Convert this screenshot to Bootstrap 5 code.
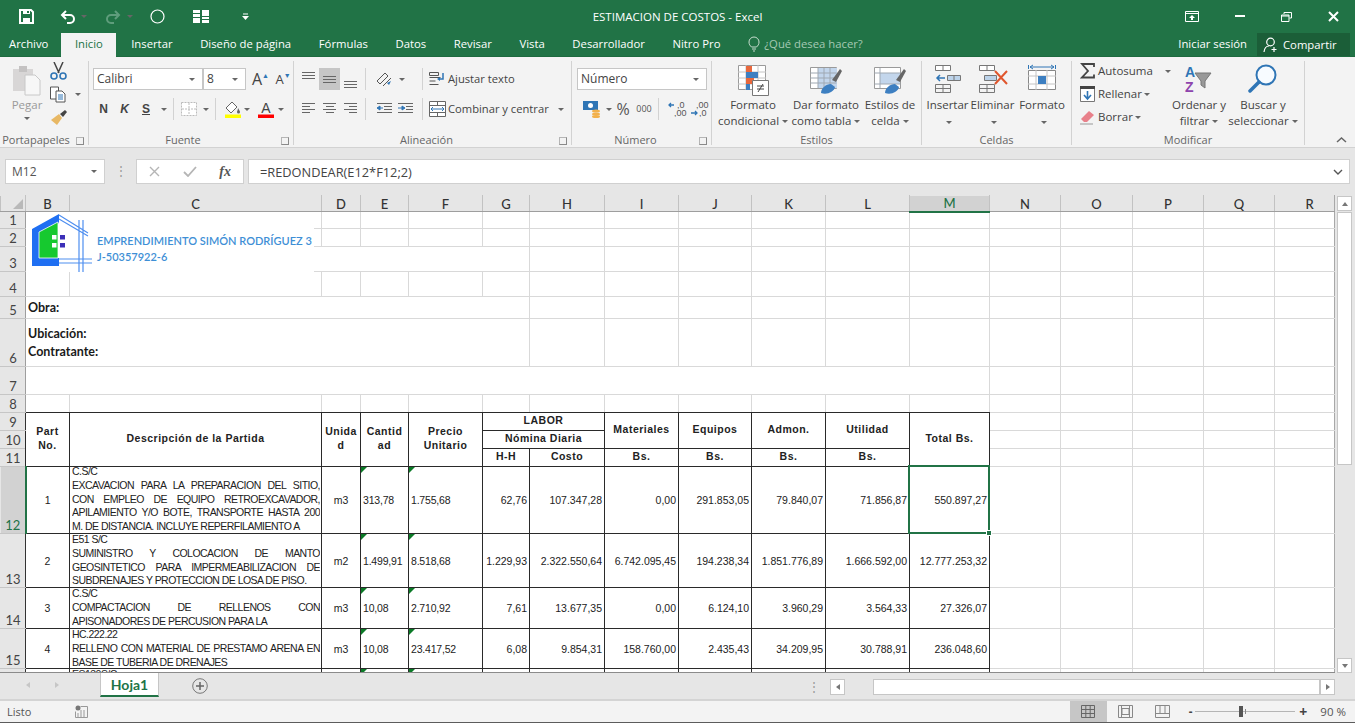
<!DOCTYPE html>
<html lang="es">
<head>
<meta charset="UTF-8">
<title>ESTIMACION DE COSTOS - Excel</title>
<link href="https://cdn.jsdelivr.net/npm/bootstrap@5.3.0/dist/css/bootstrap.min.css" rel="stylesheet">
<style>
html,body{margin:0;height:723px;overflow:hidden;background:#e6e6e6}
.xl-app{width:1355px;height:723px;overflow:hidden;font-family:"Open Sans","Noto Sans",sans-serif;font-size:11.5px;color:#444;line-height:16px}
svg{display:block;flex:none}
.ml1{margin-left:1px}.ml2{margin-left:2px}.ml4{margin-left:4px}.ml6{margin-left:6px}.ml9{margin-left:9px}.mr2{margin-right:2px}.mr5{margin-right:5px}.mr6{margin-right:6px}
/* title + tabs */
.xl-top{background:#217346;color:#fff;height:57px;border-bottom:1px solid #1d6a3f;flex:none}
.xl-title{height:33px}
.xl-qat{flex:1 1 0}
.xl-doc{font-size:11.5px;color:#fff;padding-top:1px}
.xl-win{flex:1 1 0;justify-content:flex-end}
.q1{margin-left:19px}.q2{margin-left:26px}.q3{margin-left:6px}.q4{margin-left:19px}.q5{margin-left:6px}.q6{margin-left:17px}.q7{margin-left:28px}.q8{margin-left:33px}
.car-w{border-top-color:#fff}.car-d{border-top-color:#5f9d7c}
.w1{margin-right:36px}.w2{margin-right:36px}.w3{margin-right:36px}.w4{margin-right:16px}
.xl-tabs{height:24px;font-size:11.3px}
.xl-tab{padding:3px 13.800px 0;white-space:nowrap;color:#fff}
.xl-tab.first{padding:3px 13px 0 9px}
.xl-tab.on{background:#f3f3f3;color:#217346;margin:0 1px 0 0;padding:3px 13.500px 0}
.xl-ask{color:#a5c9b4;padding:3px 0 0 14px}
.xl-share{background:#1b5e38;width:93px;height:23px;margin:0 5px 0 10px;padding-left:6px;gap:4px}
/* ribbon */
.xl-ribbon{height:91px;background:#f3f3f3;border-bottom:1px solid #d2d2d2;padding-top:4px;flex:none}
.xl-grp{height:84px;border-right:1px solid #d2d2d2;position:relative;flex:none}
.xl-body{height:71px}
.xl-lbl{height:13px;line-height:16px;text-align:center;color:#666;font-size:11px;white-space:nowrap}
.xl-launch{position:absolute;right:4px;bottom:0;width:8px;height:8px;border:1px solid #8a8a8a;border-top-color:#b5b5b5;border-left-color:#b5b5b5}
.g1{width:89px}.g2{width:205px}.g3{width:278px}.g4{width:140px}.g5{width:210px}.g6{width:150px}.g7{width:233px}
.pr16{padding-right:16px}.pr12{padding-right:12px}
.xl-row{height:22px}
.xl-rows{padding-top:7px;display:flex;flex-direction:column;gap:8px}
.xl-pl5{padding-left:5px}.xl-pl3{padding-left:3px}
.tb{display:inline-flex;align-items:center;justify-content:center;height:22px;width:21px;flex:none;color:#444}
.tb.on{background:#c6c6c6}
.tb-b{font-family:"Liberation Sans",sans-serif;font-size:12px;font-weight:700}
.tb-up{font-size:16px}.tb-dn{font-size:13px;width:24px}
.tb-up sup,.tb-dn sup{font-size:7px;color:#2f75b5}
.tb-pct{font-size:16px;color:#555;width:22px}
.tb-th{font-size:9px;color:#555;width:20px}
.tb-w22{width:22px}
.xl-vsep{width:1px;height:22px;background:#d2d2d2;flex:none}
.xl-vsep.a{margin:0 6px 0 17px}.xl-vsep.b{margin:0 6px}
.xl-caret{width:0;height:0;border:3px solid transparent;border-top:3.500px solid #666;border-bottom:0;display:inline-block;flex:none}
.xl-field{height:22px;background:#fff;border:1px solid #c6c6c6;padding:0 7px 0 3px;font-size:12px;justify-content:space-between;flex:none}
.fw110{width:110px}.fw43{width:43px}.fw130{width:130px}
.xl-big{display:flex;flex-direction:column;align-items:center;padding-top:3px;flex:none;text-align:center;white-space:nowrap}
.xl-big svg{margin-bottom:1px}
.xl-big svg[height="30"]{margin-bottom:3px}
.xl-big .xl-caret{margin-left:3px;vertical-align:2px}
.bw-paste{width:46px;color:#9a9a9a}
.bw74{width:74px}.bw72{width:72px}.bw56{width:56px}.bw44{width:45px}.bw54{width:54px}.bw48{width:48px}.bw80{width:80px}
.xl-smallcol{display:flex;flex-direction:column;margin-top:-1px;gap:1px}
.xl-smallcol>div{height:22px;display:flex;align-items:center}
.xl-w103{width:103px}
.xl-small-t{font-size:11.200px;white-space:nowrap}
.xl-chev{margin:auto 8px 4px auto}
/* formula bar */
.xl-fbar{height:47px;background:#e6e6e6;padding:11px 5px 0 5px;flex:none}
.xl-box{height:25px;background:#fff;border:1px solid #d0d0d0;align-items:center;flex:none}
.xl-name{width:100px;padding:0 7px 0 6px;font-size:12px;justify-content:space-between;color:#555}
.xl-dots{width:31px;color:#999;justify-content:center;flex:none;line-height:24px}
.xl-fn{width:108px;justify-content:space-between;padding:0 12px}
.xl-fxt{font-family:"Liberation Serif",serif;font-style:italic;font-weight:700;font-size:14px;color:#555}
.xl-input{flex:1 1 0;margin-left:4px;padding:0 6px 0 11px;justify-content:space-between;font-size:12.800px;color:#444}
/* sheet */
.xl-main{height:478px;flex:none}
.xl-wrap{width:1335px;height:478px;overflow:hidden;position:relative;background:#fff;flex:none;border-bottom:1px solid #8b8b8b}
.xl-sheet{border-collapse:collapse;table-layout:fixed;width:1334px;font-family:"Liberation Sans",sans-serif;font-size:10.500px;color:#222;line-height:14px}
.xl-sheet td,.xl-sheet th{border:1px solid #d9d9d9;padding:0 2px;position:relative;overflow:visible;white-space:nowrap;font-weight:400}
.xl-sheet tr>*:last-child{border-right-color:#a8a8a8}
.xl-sheet thead th{background:#e6e6e6;border-color:#e6e6e6 #c2c2c2 #9e9e9e #c2c2c2;text-align:center;font-family:Lato,sans-serif;font-size:13px;font-weight:500;color:#333;padding:0;height:16px}
.xl-sheet thead th.sel{background:#d2d2d2;color:#217346;border-bottom:2px solid #217346}
.xl-sheet thead th.last{padding-left:10px}
.c0{width:25px}.c1{width:44px}.c2{width:252px}.c3{width:39px}.c4{width:48px}.c5{width:74px}.c6{width:47px}.c7{width:75px}.c8{width:74px}.c9{width:73px}.c10{width:74px}.c11{width:84px}.c12{width:80px}.c13{width:71px}.c14{width:72px}.c15{width:71px}.c16{width:71px}.c17{width:60px}
.rh{background:#e6e6e6!important;border-color:#c6c6c6 #9e9e9e #c6c6c6 #e6e6e6!important;text-align:center;font-family:Lato,sans-serif;font-size:13px;color:#444;vertical-align:bottom;padding:0!important;line-height:15px}
.rh.sel{background:#d2d2d2!important;color:#217346;border-right:2px solid #217346!important}
.rh.dk{border-right-color:#333!important}
.r1>*{height:17px}.r2>*{height:18px}.r3>*{height:25px}.r4>*{height:25px}.r5>*{height:22px}.r6>*{height:48px}.r7>*{height:28px}.r8>*{height:18px}
.r9>*,.r10>*,.r11>*{height:18px}.r12>*{height:67px}.r13>*{height:54px}.r14>*{height:41px}.r15>*{height:40px}.r16>*{height:40px}
.r8>.ln{border-bottom-color:#2a2a2a}
.xl-sheet td.bx{border-color:#2a2a2a}
.xl-sheet td.hd{font-weight:700;font-size:10.500px;text-align:center;vertical-align:middle;letter-spacing:.5px;line-height:14px;white-space:normal;padding:0 0 3px}
.xl-sheet td.nm{text-align:right;padding-right:2px;vertical-align:middle}
.xl-sheet td.ct{text-align:center;vertical-align:middle}
.xl-sheet td.lf{text-align:left;vertical-align:middle;letter-spacing:-.2px}
.xl-sheet td.ds{vertical-align:top;padding:0 1px 0 2px}
.xl-ds{letter-spacing:-.53px;overflow:hidden;margin-top:-2px;line-height:13.800px}
.r13 .xl-ds,.r14 .xl-ds,.r15 .xl-ds,.r16 .xl-ds{margin-top:-1px}
.r12 .xl-ds{height:68px}.r13 .xl-ds{height:54px}.r14 .xl-ds{height:41px}.r15 .xl-ds{height:40px}
.jl{text-align:justify;text-align-last:justify}
.gc::before{content:"";position:absolute;left:0;top:0;border-top:6px solid #0b7a27;border-right:6px solid transparent}
.xl-sel{position:absolute;left:-2px;right:-1px;top:-2px;bottom:-1px;border:2px solid #217346}
.xl-hand{position:absolute;right:-4px;bottom:-4px;width:6px;height:6px;background:#217346;border:1px solid #fff}
.xl-sheet td.tl{font-family:Lato,sans-serif;font-weight:700;font-size:12.500px;color:#1a1a1a;padding-left:2px}
.xl-sheet td.tl.top{vertical-align:top;padding-top:6px;line-height:17.500px}
.xl-corner{position:absolute;right:2px;bottom:2px;border-bottom:10px solid #b9b9b9;border-left:10px solid transparent}
.xl-logo{position:absolute;left:26px;top:17px;width:288px;height:60px;background:#fff;z-index:3}
.xl-logo svg{margin-top:2px}
.xl-brand{font-family:Lato,sans-serif;font-weight:600;font-size:11px;line-height:16px;color:#3e8fd6;white-space:nowrap;padding:21px 0 0 0}
/* scrollbars */
.xl-vs{width:20px;background:#e6e6e6;padding:1px 3px 0 2px;flex:none;height:478px}
.xl-sb{width:15px;background:#fff;border:1px solid #c6c6c6;display:flex;align-items:center;justify-content:center;flex:none}
.xl-thumb{height:253px;margin-top:1px}
.xl-sbb{height:15px}
.tri-u{border:3.500px solid transparent;border-bottom:4px solid #777;border-top:0}
.tri-d{border:3.500px solid transparent;border-top:4px solid #777;border-bottom:0}
.tri-l{border:3.500px solid transparent;border-right:4px solid #777;border-left:0}
.tri-r{border:3.500px solid transparent;border-left:4px solid #777;border-right:0}
/* sheet tabs */
.xl-tabsbar{height:28px;background:#e6e6e6;flex:none;border-bottom:2px solid #d4d4d4}
.xl-nav{width:100px;gap:25px;padding-left:26px;height:24px}
.xl-nav .tri-l{border-right-color:#c6c6c6}
.xl-nav .tri-r{border-left-color:#c6c6c6}
.xl-stab{width:59px;height:24px;background:#fff;border:1px solid #c6c6c6;border-top:0;border-bottom:2px solid #217346;color:#217346;font-family:Lato,sans-serif;font-weight:700;font-size:14px;text-align:center;line-height:23px}
.xl-plus{margin:5px 0 0 33px}
.xl-hdots{margin:6px 1px 0 auto;color:#999;line-height:16px}
.xl-hscroll{width:505px;height:16px;margin:6px 20px 0 9px}
.xl-htrack{width:28px;background:#e6e6e6;flex:none}
.xl-hth{flex:1 1 0;height:16px;background:#fff;border:1px solid #c6c6c6}
.xl-hb{width:15px;height:16px}
/* status */
.xl-status{height:22px;background:#f3f3f3;flex:none;border-bottom:1px solid #5c5c5c}
.xl-ready{padding-left:7px;width:75px;font-size:11px;color:#555}
.xl-view{width:37px;height:21px;display:flex;align-items:center;justify-content:center;flex:none}
.xl-view.on{background:#c6c6c6}
.xl-slider{width:100px;height:1px;background:#b5b5b5;position:relative;margin:0 4px 0 3px}
.xl-knob{position:absolute;left:44px;top:-5px;width:4px;height:11px;background:#555}
.xl-tick{position:absolute;left:50px;top:-2px;width:1px;height:5px;background:#888}
.xl-plusz{font-size:14px;font-weight:700}
.xl-pct{font-size:11.500px;color:#555;margin:0 9px 0 13px;white-space:nowrap}
</style>
</head>
<body>
<div class="xl-app d-flex flex-column">

  <!-- title bar and tabs -->
  <div class="xl-top">
    <div class="xl-title d-flex align-items-center">
      <div class="xl-qat d-flex align-items-center">
        <svg class="q1" width="15" height="15" viewBox="0 0 15 15"><path d="M1 1h11l2 2v11H1z" fill="none" stroke="#fff" stroke-width="2"/><path d="M4 1h7v4H4zM4 9h7v5H4z" fill="#fff"/><path d="M8 2h2v2H8z" fill="#217346"/></svg>
        <svg class="q2" width="15" height="14" viewBox="0 0 15 14"><path d="M3 5h7a3.600 3.600 0 0 1 0 8H7" fill="none" stroke="#fff" stroke-width="2"/><path d="M6 1 2 5l4 4" fill="none" stroke="#fff" stroke-width="2"/></svg>
        <span class="xl-caret q3 car-w"></span>
        <svg class="q4" width="15" height="14" viewBox="0 0 15 14"><path d="M12 5H5a3.600 3.600 0 0 0 0 8h3" fill="none" stroke="#5f9d7c" stroke-width="2"/><path d="m9 1 4 4-4 4" fill="none" stroke="#5f9d7c" stroke-width="2"/></svg>
        <span class="xl-caret q5 car-d"></span>
        <svg class="q6" width="15" height="15" viewBox="0 0 15 15"><circle cx="7.500" cy="7.500" r="6.500" fill="none" stroke="#fff" stroke-width="1.200"/></svg>
        <svg class="q7" width="16" height="13" viewBox="0 0 16 13"><path d="M0 0h7v3H0zM0 4h7v3H0zM0 8h7v5H0zM9 0h7v6H9zM9 7h7v2H9zM9 10h7v3H9z" fill="#fff"/></svg>
        <svg class="q8" width="7" height="7" viewBox="0 0 7 7"><path d="M1 .5h5v1H1zM0 3h7L3.500 7z" fill="#fff"/></svg>
      </div>
      <div class="xl-doc">ESTIMACION DE COSTOS - Excel</div>
      <div class="xl-win d-flex align-items-center">
        <svg class="w1" width="14" height="11" viewBox="0 0 14 11"><path d="M.5.5h13v10H.500zM.5 2.500h13" fill="none" stroke="#fff"/><path d="M7 4l3 3H8v2H6V7H4z" fill="#fff"/></svg>
        <svg class="w2" width="10" height="3" viewBox="0 0 10 3"><path d="M0 0h10v2H0z" fill="#fff"/></svg>
        <svg class="w3" width="11" height="10" viewBox="0 0 11 10"><path d="M3 2V.5h7.500V6H8.500M.5 3h7.500v6.500H.500zM.5 4h7.500" fill="none" stroke="#fff"/></svg>
        <svg class="w4" width="11" height="11" viewBox="0 0 11 11"><path d="m1 1 9 9M10 1l-9 9" stroke="#fff" stroke-width="2"/></svg>
      </div>
    </div>
    <div class="xl-tabs d-flex">
      <div class="xl-tab first">Archivo</div>
      <div class="xl-tab on">Inicio</div>
      <div class="xl-tab">Insertar</div>
      <div class="xl-tab">Diseño de página</div>
      <div class="xl-tab">Fórmulas</div>
      <div class="xl-tab">Datos</div>
      <div class="xl-tab">Revisar</div>
      <div class="xl-tab">Vista</div>
      <div class="xl-tab">Desarrollador</div>
      <div class="xl-tab">Nitro Pro</div>
      <div class="xl-ask d-flex gap-1">
        <svg width="12" height="16" viewBox="0 0 12 16"><path d="M3.500 11C2 9.500 1 8.500 1 6a5 5 0 0 1 10 0c0 2.500-1 3.500-2.500 5zM4 13h4M5 15h2" fill="none" stroke="#c8ddcf"/></svg>
        ¿Qué desea hacer?
      </div>
      <div class="ms-auto xl-tab pe-0">Iniciar sesión</div>
      <div class="xl-share d-flex align-items-center">
        <svg width="15" height="16" viewBox="0 0 15 16"><circle cx="7.500" cy="5" r="3.800" fill="none" stroke="#fff" stroke-width="1.200"/><path d="M1 15c.5-4 2.500-6 5-6M11 10v5M8.500 12.500h5" fill="none" stroke="#fff" stroke-width="1.200"/></svg>
        <span class="text-white ml1">Compartir</span>
      </div>
    </div>
  </div>

  <!-- ribbon -->
  <div class="xl-ribbon d-flex">
    <!-- portapapeles -->
    <div class="xl-grp g1">
      <div class="xl-body d-flex">
        <div class="xl-big bw-paste ms-1">
          <svg width="30" height="32" viewBox="0 0 30 32"><path d="M1 5h20v22H1z" fill="#d8d6d6"/><path d="M7 2h8v6H7z" fill="#c4c2c2"/><path d="M13 11h10l5 5v15H13z" fill="#f7f7f7" stroke="#c8c8c8"/></svg>
          <span>Pegar</span>
          <span class="xl-caret mt-1 ms-0"></span>
        </div>
        <div class="xl-smallcol">
          <div><svg width="17" height="18" viewBox="0 0 17 18"><path d="M4 0l5 11M13 0 8 11" stroke="#444" stroke-width="1.500"/><circle cx="4" cy="14" r="3" fill="none" stroke="#2f75b5" stroke-width="1.600"/><circle cx="13" cy="14" r="3" fill="none" stroke="#2f75b5" stroke-width="1.600"/></svg></div>
          <div><svg width="17" height="17" viewBox="0 0 17 17"><path d="M.5 1h8v12h-8z" fill="#fff" stroke="#555"/><path d="M6 5h6l3 3v8H6z" fill="#fff" stroke="#555"/><path d="M8 9h5M8 11h5M8 13h5" stroke="#2f75b5"/></svg><span class="xl-caret ms-2"></span></div>
          <div><svg width="17" height="15" viewBox="0 0 17 15"><path d="M1 10 9 4l3 4-5 7z" fill="#e8b864"/><path d="M10 4l5-4 2 2-4 5z" fill="#444"/></svg></div>
        </div>
      </div>
      <div class="xl-lbl pr16">Portapapeles</div>
      <span class="xl-launch"></span>
    </div>

    <!-- fuente -->
    <div class="xl-grp g2">
      <div class="xl-body xl-rows ps-1">
        <div class="xl-row d-flex align-items-center">
          <div class="xl-field fw110 d-flex align-items-center"><span>Calibri</span><span class="xl-caret"></span></div>
          <div class="xl-field fw43 d-flex align-items-center"><span>8</span><span class="xl-caret"></span></div>
          <span class="tb tb-up ms-1">A<sup>▲</sup></span>
          <span class="tb tb-dn">A<sup>▼</sup></span>
        </div>
        <div class="xl-row d-flex align-items-center">
          <span class="tb tb-b">N</span>
          <span class="tb tb-b fst-italic">K</span>
          <span class="tb tb-b tb-w22 text-decoration-underline">S</span>
          <span class="xl-caret ml4 mr6"></span>
          <span class="xl-vsep"></span>
          <span class="tb ms-1"><svg width="16" height="14" viewBox="0 0 16 14"><path d="M.5.500h15v13H.500z" fill="#fff" stroke="#bbb" stroke-dasharray="2 1"/><path d="M8 1v12M1 7h14" stroke="#bbb" stroke-dasharray="2 1"/></svg></span>
          <span class="xl-caret ml4 mr6"></span>
          <span class="xl-vsep"></span>
          <span class="tb ml6"><svg width="16" height="17" viewBox="0 0 16 17"><path d="M7 1 1 7l5 5 6-6z" fill="#fff" stroke="#666"/><path d="M13 7c1 2 2 3 2 4a1.500 1.500 0 0 1-3 0c0-1 1-2 1-4z" fill="#666"/><path d="M0 13.500h16V17H0z" fill="#ffff00"/></svg></span>
          <span class="xl-caret ml1 mr5"></span>
          <span class="tb"><svg width="16" height="17" viewBox="0 0 16 17"><text x="8" y="12" text-anchor="middle" font-family="Liberation Sans" font-size="14" fill="#444">A</text><path d="M0 13.500h16V17H0z" fill="#ff0000"/></svg></span>
          <span class="xl-caret ml2"></span>
        </div>
      </div>
      <div class="xl-lbl pr16">Fuente</div>
      <span class="xl-launch"></span>
    </div>

    <!-- alineacion -->
    <div class="xl-grp g3">
      <div class="xl-body xl-rows ps-1">
        <div class="xl-row d-flex align-items-center">
          <span class="tb"><svg width="15" height="20" viewBox="0 0 15 20"><path d="M1 3.500h13M1 6.500h13M1 9.500h13" stroke="#666"/></svg></span>
          <span class="tb on"><svg width="15" height="20" viewBox="0 0 15 20"><path d="M1 7.500h13M1 10.500h13M1 13.500h13" stroke="#666"/></svg></span>
          <span class="tb"><svg width="15" height="20" viewBox="0 0 15 20"><path d="M1 12.500h13M1 15.500h13M1 18.500h13" stroke="#666"/></svg></span>
          <span class="xl-vsep ms-1 me-1"></span>
          <span class="tb ms-1"><svg width="17" height="15" viewBox="0 0 17 15"><path d="M1 9 9 1l3 3-8 8zM7 14l8-8" fill="none" stroke="#555"/><path d="m11 11 4-2-2 4z" fill="#2f75b5"/></svg></span>
          <span class="xl-caret ms-1"></span>
          <span class="xl-vsep a"></span>
          <svg width="17" height="16" viewBox="0 0 17 16"><path d="M.5 1.500h9v3h-9zM.5 6.500h11M.5 10h6M.5 13.500h9" fill="none" stroke="#555"/><path d="M14 2v6h-4" fill="none" stroke="#2f75b5" stroke-width="1.500"/><path d="m11 6-3 2 3 2z" fill="#2f75b5"/></svg>
          <span class="ml2 xl-small-t">Ajustar texto</span>
        </div>
        <div class="xl-row d-flex align-items-center">
          <span class="tb"><svg width="15" height="12" viewBox="0 0 15 12"><path d="M1 .5h13M1 3.500h8M1 6.500h13M1 9.500h8" stroke="#666"/></svg></span>
          <span class="tb"><svg width="15" height="12" viewBox="0 0 15 12"><path d="M1 .5h13M4 3.500h8M1 6.500h13M4 9.500h8" stroke="#666"/></svg></span>
          <span class="tb"><svg width="15" height="12" viewBox="0 0 15 12"><path d="M1 .5h13M6 3.500h8M1 6.500h13M6 9.500h8" stroke="#666"/></svg></span>
          <span class="xl-vsep ms-1 me-1"></span>
          <span class="tb ms-1"><svg width="17" height="12" viewBox="0 0 17 12"><path d="M1 .5h15M8 3.500h8M8 6.500h8M1 9.500h15" stroke="#666"/><path d="M7 5H3M4 3 1 5l3 2z" fill="#2f75b5" stroke="#2f75b5"/></svg></span>
          <span class="tb"><svg width="17" height="12" viewBox="0 0 17 12"><path d="M1 .5h15M9 3.500h7M9 6.500h7M1 9.500h15" stroke="#666"/><path d="M1 5h4M5 3l3 2-3 2z" fill="#2f75b5" stroke="#2f75b5"/></svg></span>
          <span class="xl-vsep b"></span>
          <svg width="17" height="16" viewBox="0 0 17 16"><path d="M.5.500h16v15H.500zM.5 4.500h16M.5 11.500h16M8.500.5v4M8.500 11.500v4" fill="#fff" stroke="#666"/><path d="M3 8h11M4 6 2 8l2 2M13 6l2 2-2 2" fill="none" stroke="#2f75b5"/></svg>
          <span class="ml2 xl-small-t">Combinar y centrar</span>
          <span class="xl-caret ml9"></span>
        </div>
      </div>
      <div class="xl-lbl pr12">Alineación</div>
      <span class="xl-launch"></span>
    </div>

    <!-- numero -->
    <div class="xl-grp g4">
      <div class="xl-body xl-rows xl-pl5">
        <div class="xl-row d-flex"><div class="xl-field fw130 d-flex align-items-center"><span>Número</span><span class="xl-caret"></span></div></div>
        <div class="xl-row d-flex align-items-center">
          <span class="tb ms-1"><svg width="18" height="17" viewBox="0 0 18 17"><path d="M0 0h15v9H0z" fill="#2f75b5"/><circle cx="7.500" cy="4.500" r="2.500" fill="#fff"/><ellipse cx="13" cy="10" rx="4" ry="1.600" fill="#f2b04a"/><ellipse cx="13" cy="13" rx="4" ry="1.600" fill="#f2b04a"/><ellipse cx="13" cy="15.500" rx="4" ry="1.500" fill="#f2b04a"/></svg></span>
          <span class="xl-caret ms-1"></span>
          <span class="tb tb-pct">%</span>
          <span class="tb tb-th">000</span>
          <span class="xl-vsep ms-1 me-1"></span>
          <span class="tb ms-1"><svg width="20" height="16" viewBox="0 0 20 16"><path d="M6 4H1M3 2 1 4l2 2" fill="none" stroke="#2f75b5" stroke-width="1.300"/><text x="9" y="7" font-family="Liberation Sans" font-size="9" fill="#555">,0</text><text x="6" y="15" font-family="Liberation Sans" font-size="9" fill="#555">,00</text></svg></span>
          <span class="tb tb-w22"><svg width="20" height="16" viewBox="0 0 20 16"><text x="7" y="7" font-family="Liberation Sans" font-size="9" fill="#555">,00</text><text x="10" y="15" font-family="Liberation Sans" font-size="9" fill="#555">,0</text><path d="M2 12h6M6 10l2 2-2 2" fill="none" stroke="#2f75b5" stroke-width="1.300"/></svg></span>
        </div>
      </div>
      <div class="xl-lbl pr12">Número</div>
      <span class="xl-launch"></span>
    </div>

    <!-- estilos -->
    <div class="xl-grp g5">
      <div class="xl-body d-flex ps-1">
        <div class="xl-big bw74">
          <svg width="32" height="32" viewBox="0 0 32 32"><path d="M1.500 1.500h27v24h-27z" fill="#fff" stroke="#9a9a9a"/><path d="M1 8h28M1 14h28M1 20h28M9 1v25M21 1v25" stroke="#c4c4c4"/><path d="M9 2h6v6H9z" fill="#e8683d"/><path d="M9 8h12v6H9z" fill="#3d7fc1"/><path d="M9 14h8v6H9z" fill="#e8683d"/><path d="M9 20h4v6H9z" fill="#3d7fc1"/><path d="M15.500 16.500h16v15h-16z" fill="#fff" stroke="#777"/><path d="M20 22h7M20 25h7M26 20l-5 8" stroke="#444"/></svg>
          <span>Formato</span><span>condicional<i class="xl-caret"></i></span>
        </div>
        <div class="xl-big bw72">
          <svg width="32" height="32" viewBox="0 0 32 32"><path d="M.5 3.500h26v21H.500z" fill="#fff" stroke="#9a9a9a"/><path d="M8 4h19v20H8z" fill="#c3d6ec"/><path d="M.5 9h26M.5 14h26M.5 19h26M8 4v20M14 4v20M20 4v20" stroke="#9fa8b2"/><path d="m22 16 8-11 2 2-6 11z" fill="#666"/><path d="M11 29c0-5 5-9 10-9l4 3c-1 5-8 8-14 6z" fill="#3d7fc1"/></svg>
          <span>Dar formato</span><span>como tabla<i class="xl-caret"></i></span>
        </div>
        <div class="xl-big bw56">
          <svg width="32" height="32" viewBox="0 0 32 32"><path d="M.5 3.500h26v21H.500z" fill="#fff" stroke="#9a9a9a"/><path d="M6 9h20v11H6z" fill="#c3d6ec"/><path d="M.5 9h26M.5 20h26M6 4v20" stroke="#9fa8b2"/><path d="m22 16 8-11 2 2-6 11z" fill="#666"/><path d="M11 29c0-5 5-9 10-9l4 3c-1 5-8 8-14 6z" fill="#3d7fc1"/></svg>
          <span>Estilos de</span><span>celda<i class="xl-caret"></i></span>
        </div>
      </div>
      <div class="xl-lbl">Estilos</div>
    </div>

    <!-- celdas -->
    <div class="xl-grp g6">
      <div class="xl-body d-flex xl-pl3">
        <div class="xl-big bw44">
          <svg width="28" height="30" viewBox="0 0 28 30"><path d="M1.500 1.500h15v5h-15zM9 1.500v5" fill="#fff" stroke="#777"/><path d="M13.500 11.500h13v5h-13z" fill="#bcd3ea" stroke="#777"/><path d="M20 11v6" stroke="#777"/><path d="M11 14H3M6 11l-3 3 3 3" fill="none" stroke="#2f75b5" stroke-width="1.500"/><path d="M1.500 20.500h15v8h-15zM1 24.500h16M9 20.500v8" fill="none" stroke="#777"/></svg>
          <span>Insertar</span><i class="xl-caret mt-2"></i>
        </div>
        <div class="xl-big bw44">
          <svg width="30" height="30" viewBox="0 0 30 30"><path d="M1.500 1.500h15v5h-15zM9 1.500v5" fill="#fff" stroke="#777"/><path d="M6.500 11.500h12v5h-12z" fill="#bcd3ea" stroke="#777"/><path d="M1.500 20.500h15v8h-15zM1 24.500h16M9 20.500v8" fill="none" stroke="#777"/><path d="m17 7 12 13M29 7 17 20" stroke="#e0562d" stroke-width="2"/></svg>
          <span>Eliminar</span><i class="xl-caret mt-2"></i>
        </div>
        <div class="xl-big bw54">
          <svg width="30" height="30" viewBox="0 0 30 30"><path d="M1.500 6.500h27v19h-27z" fill="#fff" stroke="#888"/><path d="M1 12h28M1 20h28M9 6v20M20 6v20" stroke="#c4c4c4"/><path d="M11 12h8v8h-8z" fill="#3d7fc1"/><path d="M1.500 1v4M28.500 1v4M3 3h24M6 1 3 3l3 2M24 1l3 2-3 2" fill="none" stroke="#2f75b5"/></svg>
          <span>Formato</span><i class="xl-caret mt-2"></i>
        </div>
      </div>
      <div class="xl-lbl">Celdas</div>
    </div>

    <!-- modificar -->
    <div class="xl-grp g7">
      <div class="xl-body d-flex">
        <div class="xl-smallcol ps-1 xl-w103">
          <div><svg width="16" height="16" class="ms-1" viewBox="0 0 16 16"><path d="M14 4V1H2l6 7-6 6.500h12v-3" fill="none" stroke="#444" stroke-width="1.800"/></svg><span class="ml2 me-2">Autosuma</span><i class="xl-caret ms-1"></i></div>
          <div><svg width="16" height="16" class="ms-1" viewBox="0 0 16 16"><path d="M.5 2.500h14v13H.500z" fill="#fff" stroke="#777"/><path d="M0 0h15v3H0z" fill="#444"/><path d="M7.500 5v7M4 9l3.500 4L11 9" fill="none" stroke="#2f75b5" stroke-width="1.600"/></svg><span class="ml2 mr2">Rellenar</span><i class="xl-caret"></i></div>
          <div><svg width="16" height="16" class="ms-1" viewBox="0 0 16 16"><path d="M1 10 9 2l5 4-7 7H4z" fill="#e8808a"/><path d="M0 15h13" stroke="#999"/></svg><span class="ml2 mr2">Borrar</span><i class="xl-caret"></i></div>
        </div>
        <div class="xl-big bw48">
          <svg width="30" height="30" viewBox="0 0 30 30"><text x="1" y="13" font-family="Liberation Sans" font-size="14" font-weight="700" fill="#2f75b5">A</text><text x="1" y="28" font-family="Liberation Sans" font-size="14" font-weight="700" fill="#8e44ad">Z</text><path d="M11 9h16l-6 8v7l-4-3v-4z" fill="#999" stroke="#777"/></svg>
          <span>Ordenar y</span><span>filtrar<i class="xl-caret"></i></span>
        </div>
        <div class="xl-big bw80">
          <svg width="30" height="30" viewBox="0 0 30 30"><circle cx="18" cy="11" r="9.500" fill="#f7fbff" stroke="#2f75b5" stroke-width="2"/><path d="m11 18-9 9" stroke="#2f75b5" stroke-width="3.500" stroke-linecap="round"/></svg>
          <span>Buscar y</span><span>seleccionar<i class="xl-caret"></i></span>
        </div>
      </div>
      <div class="xl-lbl">Modificar</div>
    </div>
    <svg class="xl-chev" width="11" height="6" viewBox="0 0 11 6"><path d="m1 5 4.500-4L10 5" fill="none" stroke="#666" stroke-width="1.500"/></svg>
  </div>

  <!-- formula bar -->
  <div class="xl-fbar d-flex">
    <div class="xl-box xl-name d-flex"><span>M12</span><span class="xl-caret"></span></div>
    <div class="xl-dots d-flex">⋮</div>
    <div class="xl-box xl-fn d-flex">
      <svg width="11" height="11" viewBox="0 0 11 11"><path d="m1 1 9 9M10 1l-9 9" stroke="#b5b5b5" stroke-width="1.400"/></svg>
      <svg width="14" height="11" viewBox="0 0 14 11"><path d="m1 6 4 4 8-9" fill="none" stroke="#b5b5b5" stroke-width="1.800"/></svg>
      <span class="xl-fxt">fx</span>
    </div>
    <div class="xl-box xl-input d-flex"><span>=REDONDEAR(E12*F12;2)</span>
      <svg width="10" height="6" viewBox="0 0 10 6"><path d="m1 1 4 4 4-4" fill="none" stroke="#555" stroke-width="1.400"/></svg>
    </div>
  </div>

  <!-- sheet -->
  <div class="xl-main d-flex">
    <div class="xl-wrap">
      <table class="xl-sheet">
        <colgroup>
          <col class="c0"><col class="c1"><col class="c2"><col class="c3"><col class="c4"><col class="c5"><col class="c6"><col class="c7"><col class="c8"><col class="c9"><col class="c10"><col class="c11"><col class="c12"><col class="c13"><col class="c14"><col class="c15"><col class="c16"><col class="c17">
        </colgroup>
        <thead>
          <tr><th><span class="xl-corner"></span></th><th>B</th><th>C</th><th>D</th><th>E</th><th>F</th><th>G</th><th>H</th><th>I</th><th>J</th><th>K</th><th>L</th><th class="sel">M</th><th>N</th><th>O</th><th>P</th><th>Q</th><th class="last">R</th></tr>
        </thead>
        <tbody>
          <tr class="r1"><td class="rh">1</td><td></td><td></td><td></td><td></td><td></td><td></td><td></td><td></td><td></td><td></td><td></td><td></td><td></td><td></td><td></td><td></td><td></td></tr>
          <tr class="r2"><td class="rh">2</td><td></td><td></td><td></td><td></td><td></td><td></td><td></td><td></td><td></td><td></td><td></td><td></td><td></td><td></td><td></td><td></td><td></td></tr>
          <tr class="r3"><td class="rh">3</td><td colspan="6"></td><td></td><td></td><td></td><td></td><td></td><td></td><td></td><td></td><td></td><td></td><td></td></tr>
          <tr class="r4"><td class="rh">4</td><td></td><td></td><td></td><td></td><td></td><td></td><td></td><td></td><td></td><td></td><td></td><td></td><td></td><td></td><td></td><td></td><td></td></tr>
          <tr class="r5"><td class="rh">5</td><td colspan="6" class="tl">Obra:</td><td></td><td></td><td></td><td></td><td></td><td></td><td></td><td></td><td></td><td></td><td></td></tr>
          <tr class="r6"><td class="rh">6</td><td colspan="6" class="tl top">Ubicación:<br>Contratante:</td><td></td><td></td><td></td><td></td><td></td><td></td><td></td><td></td><td></td><td></td><td></td></tr>
          <tr class="r7"><td class="rh">7</td><td colspan="12"></td><td></td><td></td><td></td><td></td><td></td></tr>
          <tr class="r8"><td class="rh">8</td><td class="ln"></td><td class="ln"></td><td class="ln"></td><td class="ln"></td><td class="ln"></td><td class="ln"></td><td class="ln"></td><td class="ln"></td><td class="ln"></td><td class="ln"></td><td class="ln"></td><td class="ln"></td><td></td><td></td><td></td><td></td><td></td></tr>
          <tr class="r9"><td class="rh dk">9</td>
            <td rowspan="3" class="bx hd">Part<br>No.</td>
            <td rowspan="3" class="bx hd">Descripción de la Partida</td>
            <td rowspan="3" class="bx hd">Unida<br>d</td>
            <td rowspan="3" class="bx hd">Cantid<br>ad</td>
            <td rowspan="3" class="bx hd">Precio<br>Unitario</td>
            <td colspan="2" class="bx hd">LABOR</td>
            <td rowspan="2" class="bx hd">Materiales</td>
            <td rowspan="2" class="bx hd">Equipos</td>
            <td rowspan="2" class="bx hd">Admon.</td>
            <td rowspan="2" class="bx hd">Utilidad</td>
            <td rowspan="3" class="bx hd">Total Bs.</td>
            <td></td><td></td><td></td><td></td><td></td></tr>
          <tr class="r10"><td class="rh dk">10</td><td colspan="2" class="bx hd">Nómina Diaria</td><td></td><td></td><td></td><td></td><td></td></tr>
          <tr class="r11"><td class="rh dk">11</td><td class="bx hd">H-H</td><td class="bx hd">Costo</td><td class="bx hd">Bs.</td><td class="bx hd">Bs.</td><td class="bx hd">Bs.</td><td class="bx hd">Bs.</td><td></td><td></td><td></td><td></td><td></td></tr>
          <tr class="r12"><td class="rh sel">12</td>
            <td class="bx ct">1</td>
            <td class="bx ds"><div class="xl-ds"><div>C.S/C</div><div class="jl">EXCAVACION PARA LA PREPARACION DEL SITIO,</div><div class="jl">CON EMPLEO DE EQUIPO RETROEXCAVADOR,</div><div class="jl">APILAMIENTO Y/O BOTE, TRANSPORTE HASTA 200</div><div>M. DE DISTANCIA. INCLUYE REPERFILAMIENTO A</div></div></td>
            <td class="bx ct">m3</td><td class="bx lf gc">313,78</td><td class="bx lf gc">1.755,68</td>
            <td class="bx nm">62,76</td><td class="bx nm">107.347,28</td><td class="bx nm">0,00</td><td class="bx nm">291.853,05</td><td class="bx nm">79.840,07</td><td class="bx nm">71.856,87</td>
            <td class="bx nm">550.897,27<span class="xl-sel"><span class="xl-hand"></span></span></td>
            <td></td><td></td><td></td><td></td><td></td></tr>
          <tr class="r13"><td class="rh dk">13</td>
            <td class="bx ct">2</td>
            <td class="bx ds"><div class="xl-ds"><div>E51 S/C</div><div class="jl">SUMINISTRO Y COLOCACION DE MANTO</div><div class="jl">GEOSINTETICO PARA IMPERMEABILIZACION DE</div><div>SUBDRENAJES Y PROTECCION DE LOSA DE PISO.</div></div></td>
            <td class="bx ct">m2</td><td class="bx lf gc">1.499,91</td><td class="bx lf gc">8.518,68</td>
            <td class="bx nm">1.229,93</td><td class="bx nm">2.322.550,64</td><td class="bx nm">6.742.095,45</td><td class="bx nm">194.238,34</td><td class="bx nm">1.851.776,89</td><td class="bx nm">1.666.592,00</td><td class="bx nm">12.777.253,32</td>
            <td></td><td></td><td></td><td></td><td></td></tr>
          <tr class="r14"><td class="rh dk">14</td>
            <td class="bx ct">3</td>
            <td class="bx ds"><div class="xl-ds"><div>C.S/C</div><div class="jl">COMPACTACION DE RELLENOS CON</div><div>APISONADORES DE PERCUSION PARA LA</div></div></td>
            <td class="bx ct">m3</td><td class="bx lf gc">10,08</td><td class="bx lf gc">2.710,92</td>
            <td class="bx nm">7,61</td><td class="bx nm">13.677,35</td><td class="bx nm">0,00</td><td class="bx nm">6.124,10</td><td class="bx nm">3.960,29</td><td class="bx nm">3.564,33</td><td class="bx nm">27.326,07</td>
            <td></td><td></td><td></td><td></td><td></td></tr>
          <tr class="r15"><td class="rh dk">15</td>
            <td class="bx ct">4</td>
            <td class="bx ds"><div class="xl-ds"><div>HC.222.22</div><div class="jl">RELLENO CON MATERIAL DE PRESTAMO ARENA EN</div><div>BASE DE TUBERIA DE DRENAJES</div></div></td>
            <td class="bx ct">m3</td><td class="bx lf gc">10,08</td><td class="bx lf gc">23.417,52</td>
            <td class="bx nm">6,08</td><td class="bx nm">9.854,31</td><td class="bx nm">158.760,00</td><td class="bx nm">2.435,43</td><td class="bx nm">34.209,95</td><td class="bx nm">30.788,91</td><td class="bx nm">236.048,60</td>
            <td></td><td></td><td></td><td></td><td></td></tr>
          <tr class="r16"><td class="rh dk"></td>
            <td class="bx ct"></td>
            <td class="bx ds"><div class="xl-ds">ES130S/C</div></td>
            <td class="bx"></td><td class="bx gc"></td><td class="bx gc"></td><td class="bx"></td><td class="bx"></td><td class="bx"></td><td class="bx"></td><td class="bx"></td><td class="bx"></td><td class="bx"></td>
            <td></td><td></td><td></td><td></td><td></td></tr>
        </tbody>
      </table>
      <!-- logo picture floating over the cells -->
      <div class="xl-logo d-flex">
        <svg width="71" height="60" viewBox="0 0 71 60">
          <path d="M6 15 33 0v9L13 20v24h20v8H6z" fill="#1f6ff2"/>
          <path d="M13 18 32 8v36H13z" fill="#16c92f" stroke="#fff" stroke-width=".8"/>
          <path d="M26 21h4.500v4.500H26zM26 29h4.500v4.500H26z" fill="#fff"/>
          <path d="M34 21h5v4.500h-5zM34 29h5v4.500h-5z" fill="#3b2fb8"/>
          <path d="M33 1 62 19M33 5l29 17M53 6v52M57 6v52M33 45h33M33 49h33" fill="none" stroke="#4f8ff0" stroke-width="1.200"/>
        </svg>
        <div class="xl-brand">EMPRENDIMIENTO SIMÓN RODRÍGUEZ 3<br>J-50357922-6</div>
      </div>
    </div>
    <div class="xl-vs d-flex flex-column">
      <div class="xl-sb xl-sbb"><span class="tri-u"></span></div>
      <div class="xl-sb xl-thumb"></div>
      <div class="xl-sb xl-sbb mt-auto"><span class="tri-d"></span></div>
    </div>
  </div>

  <!-- sheet tabs -->
  <div class="xl-tabsbar d-flex">
    <div class="xl-nav d-flex align-items-center"><span class="tri-l"></span><span class="tri-r"></span></div>
    <div class="xl-stab">Hoja1</div>
    <svg class="xl-plus" width="16" height="16" viewBox="0 0 16 16"><circle cx="8" cy="8" r="7.300" fill="none" stroke="#777"/><path d="M8 4v8M4 8h8" stroke="#666" stroke-width="1.500"/></svg>
    <span class="xl-hdots">⋮</span>
    <div class="xl-hscroll d-flex">
      <div class="xl-sb xl-hb"><span class="tri-l"></span></div>
      <div class="xl-htrack"></div>
      <div class="xl-hth"></div>
      <div class="xl-sb xl-hb"><span class="tri-r"></span></div>
    </div>
  </div>

  <!-- status bar -->
  <div class="xl-status d-flex align-items-center">
    <div class="xl-ready">Listo</div>
    <svg width="13" height="13" viewBox="0 0 13 13"><circle cx="3" cy="3" r="2.500" fill="#777"/><path d="M5.500 1.500h7v11H.500V6.500M3 8v4M6 5v7M9 5v7" fill="none" stroke="#999"/></svg>
    <div class="xl-view on ms-auto"><svg width="14" height="13" viewBox="0 0 14 13"><path d="M.5.500h13v12H.500zM.5 4.500h13M.5 8.500h13M4.800.5v12M9.200.5v12" fill="none" stroke="#666"/></svg></div>
    <div class="xl-view"><svg width="15" height="13" viewBox="0 0 15 13"><path d="M.5.500h14v12H.500zM3.500.5v12M11.500.5v12M4 3.500h7v6H4z" fill="none" stroke="#888"/></svg></div>
    <div class="xl-view"><svg width="15" height="13" viewBox="0 0 15 13"><path d="M.5.500h14v12H.500zM.5 8.500h14M5 .5v8M10 .5v8" fill="none" stroke="#888"/></svg></div>
    <span class="ms-2 fw-bold">-</span>
    <div class="xl-slider"><span class="xl-knob"></span><span class="xl-tick"></span></div>
    <span class="xl-plusz">+</span>
    <div class="xl-pct">90 %</div>
  </div>
</div>
<script src="https://cdn.jsdelivr.net/npm/bootstrap@5.3.0/dist/js/bootstrap.bundle.min.js"></script>
</body>
</html>
